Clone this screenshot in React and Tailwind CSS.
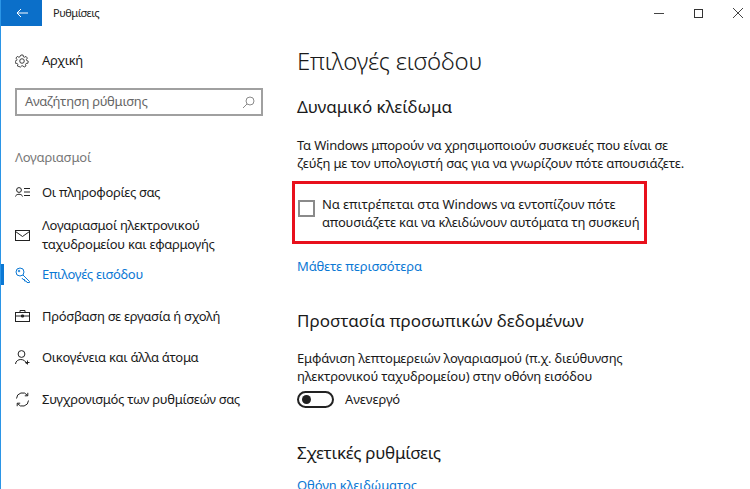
import React from "react";

const F = { fontFamily: '"Noto Sans", sans-serif' };

const Gear = () => (
  <svg width="14" height="14" viewBox="0 0 16 16" fill="none" stroke="#222" strokeWidth="1">
    <circle cx="8" cy="8" r="2.6" />
    <path d="M6.7 1h2.6l.4 2.1 1.2.6 1.9-1 1.700 2-1.200 1.600.3 1.300 1.900.8-.4 2.500-2.100.2-.8 1.100.6 2-2.200 1.300-1.500-1.500h-1.400l-1.500 1.500L2.400 14.200l.6-2-.8-1.100-2.100-.2-.4-2.500 1.900-.8.3-1.300L.7 4.700l1.700-2 1.900 1 1.200-.6z" transform="translate(.4 .2) scale(.95)" />
  </svg>
);
const Search = () => (
  <svg width="13" height="13" viewBox="0 0 13 13" fill="none" stroke="#8a8a8a" strokeWidth="1">
    <circle cx="8" cy="5" r="4" />
    <path d="M5 8 L1 12" />
  </svg>
);
const Info = () => (
  <svg width="15" height="11" viewBox="0 0 15 11" fill="none" stroke="#222" strokeWidth="1">
    <circle cx="4" cy="3" r="2.400" />
    <path d="M.5 9.500C1 6.500 7 6.500 7.500 9.500M9 1.500h6M9 5h6M9 8.500h6" />
  </svg>
);
const Mail = () => (
  <svg width="15" height="11" viewBox="0 0 15 11" fill="none" stroke="#222" strokeWidth="1">
    <rect x=".5" y=".5" width="14" height="10" />
    <path d="M.5 1.500 7.500 6.500 14.500 1.500" />
  </svg>
);
const Key = () => (
  <svg width="16" height="16" viewBox="0 0 16 16" fill="none" stroke="#0b78d4" strokeWidth="1">
    <circle cx="5" cy="5" r="4" />
    <path d="M8 8l6.500 6.500v1h-2.500l-1-1.500h-1.500v-1.500h-1.500l-1-1.500" />
    <circle cx="4" cy="4" r=".8" />
  </svg>
);
const Brief = () => (
  <svg width="15" height="12" viewBox="0 0 15 12" fill="none" stroke="#222" strokeWidth="1">
    <rect x=".5" y="2.500" width="14" height="9" />
    <path d="M5 2.500V.5h5v2M.5 6h14" />
    <path d="M6.500 5h2v2h-2z" fill="#222" />
  </svg>
);
const Family = () => (
  <svg width="16" height="15" viewBox="0 0 16 15" fill="none" stroke="#222" strokeWidth="1">
    <circle cx="6.500" cy="4" r="3.400" />
    <path d="M.5 14c.5-6 10-6 11 0M12.500 10.500v4M10.500 12.500h4" />
  </svg>
);
const Sync = () => (
  <svg width="15" height="15" viewBox="0 0 15 15" fill="none" stroke="#222" strokeWidth="1">
    <path d="M1.500 6.500A6 6 0 0 1 12.500 3.500M13.500 8.500A6 6 0 0 1 2.500 11.500" />
    <path d="M12.800 .8v3h-3M2.200 14.200v-3h3" />
  </svg>
);

const Item = ({ icon, children, active, h, mt }) => (
  <div className={`flex items-center shrink-0 ${h} ${mt}`}>
    <div className={`w-[3px] self-stretch ${active ? "bg-[#0b78d4]" : ""}`} />
    <div className="w-[38px] pl-[11px] flex items-center justify-start">{icon}</div>
    <div className={`text-[13px] leading-[19px] tracking-[-0.3px] ${active ? "text-[#0b78d4]" : "text-[#1a1a1a]"}`}>{children}</div>
  </div>
);

export default function App() {
  return (
    <div style={F} className="h-[489px] w-[750px] overflow-hidden bg-white border-l border-[#2b95e6] flex flex-col">
      <div className="h-[26px] flex shrink-0 items-stretch">
        <div className="w-[41px] bg-[#0b6fc9] flex items-center justify-center">
          <svg width="12" height="10" viewBox="0 0 12 10" fill="none" stroke="#fff" strokeWidth="1">
            <path d="M12 5H1M5 1 1 5l4 4" />
          </svg>
        </div>
        <div className="pl-[11px] text-[11px] leading-[25px] text-[#222] tracking-[-0.5px]">Ρυθμίσεις</div>
        <div className="ml-auto flex items-center pr-[7px] gap-[30px]">
          <div className="w-[10px] h-px bg-[#444]" />
          <div className="w-[9px] h-[9px] border border-[#333]" />
          <svg width="10" height="10" viewBox="0 0 10 10" stroke="#444" strokeWidth="1"><path d="M0 0l10 10M10 0 0 10" /></svg>
        </div>
      </div>
      <div className="flex flex-1 min-h-0">
        <div className="w-[280px] shrink-0 flex flex-col">
          <div className="flex items-center shrink-0 h-[28px] mt-[21px]">
            <div className="pl-[14px] w-[41px]"><Gear /></div>
            <div className="text-[13px] text-[#1a1a1a] tracking-[-0.3px]">Αρχική</div>
          </div>
          <div className="mt-[13px] ml-[14px] shrink-0 w-[248px] h-[28px] border-2 border-[#a0a0a0] flex items-center justify-between px-[8px] pr-[6px]">
            <span className="text-[13px] text-[#666] tracking-[-0.3px]">Αναζήτηση ρύθμισης</span>
            <Search />
          </div>
          <div className="mt-[31px] ml-[14px] text-[13px] leading-[20px] text-[#777] tracking-[-0.2px]">Λογαριασμοί</div>
          <Item icon={<Info />} h="h-[24px]" mt="mt-[13px]">Οι πληροφορίες σας</Item>
          <Item icon={<Mail />} h="h-[38px]" mt="mt-[12px]">Λογαριασμοί ηλεκτρονικού<br />ταχυδρομείου και εφαρμογής</Item>
          <Item icon={<Key />} active h="h-[21px]" mt="mt-[10px]">Επιλογές εισόδου</Item>
          <Item icon={<Brief />} h="h-[24px]" mt="mt-[19px]">Πρόσβαση σε εργασία ή σχολή</Item>
          <Item icon={<Family />} h="h-[24px]" mt="mt-[17px]">Οικογένεια και άλλα άτομα</Item>
          <Item icon={<Sync />} h="h-[24px]" mt="mt-[18px]">Συγχρονισμός των ρυθμίσεών σας</Item>
        </div>
        <div className="flex-1 pl-[16px] flex flex-col items-start min-h-0 *:shrink-0">
          <div className="mt-[17px] text-[24px] leading-[36px] font-light text-[#1a1a1a] tracking-[-0.2px]">Επιλογές εισόδου</div>
          <div className="mt-[16px] text-[17px] leading-[24px] text-[#1a1a1a] tracking-[-0.05px]">Δυναμικό κλείδωμα</div>
          <div className="mt-[17px] text-[13px] leading-[18px] text-[#1a1a1a] whitespace-nowrap">
            <div className="tracking-[-0.22px]">Τα Windows μπορούν να χρησιμοποιούν συσκευές που είναι σε</div>
            <div className="tracking-[-0.15px]">ζεύξη με τον υπολογιστή σας για να γνωρίζουν πότε απουσιάζετε.</div>
          </div>
          <div className="mt-[9px] -ml-[5px] w-[355px] h-[63px] border-[3px] border-[#e8101c] flex items-center">
            <div className="ml-[3px] w-[17px] h-[17px] border-2 border-[#8a8a8a] shrink-0 -mt-[9px]" />
            <div className="ml-[7px] text-[13px] leading-[18px] text-[#1a1a1a] whitespace-nowrap">
              <div className="tracking-[-0.1px]">Να επιτρέπεται στα Windows να εντοπίζουν πότε</div>
              <div className="tracking-[-0.2px]">απουσιάζετε και να κλειδώνουν αυτόματα τη συσκευή</div>
            </div>
          </div>
          <div className="mt-[12px] text-[13px] leading-[20px] text-[#0b78d4] tracking-[-0.1px]">Μάθετε περισσότερα</div>
          <div className="mt-[33px] text-[17px] leading-[24px] text-[#1a1a1a]">Προστασία προσωπικών δεδομένων</div>
          <div className="mt-[16px] text-[13px] leading-[18px] text-[#1a1a1a] tracking-[-0.17px] whitespace-nowrap">
            Εμφάνιση λεπτομερειών λογαριασμού (π.χ. διεύθυνσης<br />ηλεκτρονικού ταχυδρομείου) στην οθόνη εισόδου
          </div>
          <div className="mt-[5px] flex items-center">
            <div className="w-[37px] h-[17px] rounded-full border-2 border-[#222] flex items-center pl-[3px]">
              <div className="w-[9px] h-[9px] rounded-full bg-[#222]" />
            </div>
            <span className="ml-[11px] text-[13px] text-[#1a1a1a] tracking-[-0.1px]">Ανενεργό</span>
          </div>
          <div className="mt-[31px] text-[17px] leading-[24px] text-[#1a1a1a] tracking-[-0.3px]">Σχετικές ρυθμίσεις</div>
          <div className="mt-[10px] text-[13px] leading-[20px] text-[#0b78d4] tracking-[-0.1px]">Οθόνη κλειδώματος</div>
        </div>
      </div>
    </div>
  );
}
